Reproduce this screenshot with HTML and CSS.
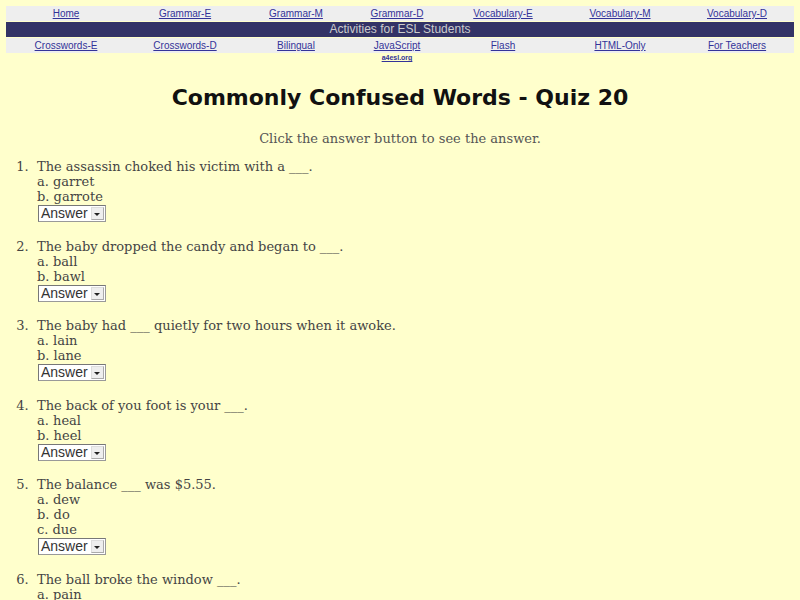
FILE: index.html
```html
<!DOCTYPE html>
<html>
<head>
<meta charset="utf-8">
<title>Commonly Confused Words - Quiz 20</title>
<link rel="stylesheet" href="styles.css">
</head>
<body>
<div class="nav">
  <div class="row links">
    <a href="#">Home</a><a href="#">Grammar-E</a><a href="#">Grammar-M</a><a href="#">Grammar-D</a><a href="#">Vocabulary-E</a><a href="#">Vocabulary-M</a><a href="#">Vocabulary-D</a>
  </div>
  <div class="row bar">Activities for ESL Students</div>
  <div class="row links">
    <a href="#">Crosswords-E</a><a href="#">Crosswords-D</a><a href="#">Bilingual</a><a href="#">JavaScript</a><a href="#">Flash</a><a href="#">HTML-Only</a><a href="#">For Teachers</a>
  </div>
  <div class="row sub">
    <span></span><span></span><span></span><a href="#" class="tiny">a4esl.org</a><span></span><span></span><span></span>
  </div>
</div>

<h1 class="title">Commonly Confused Words - Quiz 20</h1>
<p class="intro">Click the answer button to see the answer.</p>

<ol class="quiz">
  <li>
    <div>The assassin choked his victim with a ___.</div>
    <div>a. garret</div>
    <div>b. garrote</div>
    <div class="ans"><span class="ans-text">Answer</span><span class="ans-btn"></span></div>
  </li>
  <li>
    <div>The baby dropped the candy and began to ___.</div>
    <div>a. ball</div>
    <div>b. bawl</div>
    <div class="ans"><span class="ans-text">Answer</span><span class="ans-btn"></span></div>
  </li>
  <li>
    <div>The baby had ___ quietly for two hours when it awoke.</div>
    <div>a. lain</div>
    <div>b. lane</div>
    <div class="ans"><span class="ans-text">Answer</span><span class="ans-btn"></span></div>
  </li>
  <li>
    <div>The back of you foot is your ___.</div>
    <div>a. heal</div>
    <div>b. heel</div>
    <div class="ans"><span class="ans-text">Answer</span><span class="ans-btn"></span></div>
  </li>
  <li>
    <div>The balance ___ was $5.55.</div>
    <div>a. dew</div>
    <div>b. do</div>
    <div>c. due</div>
    <div class="ans"><span class="ans-text">Answer</span><span class="ans-btn"></span></div>
  </li>
  <li>
    <div>The ball broke the window ___.</div>
    <div>a. pain</div>
    <div>b. pane</div>
    <div class="ans"><span class="ans-text">Answer</span><span class="ans-btn"></span></div>
  </li>
</ol>
</body>
</html>
```

FILE: styles.css
```css
html, body {
  margin: 0;
  padding: 0;
  background: #ffffcc;
}
body {
  padding: 6px 6px 0 6px;
  font-family: "DejaVu Serif", serif;
  color: #444444;
}
.nav {
  display: flex;
  flex-direction: column;
  gap: 1px;
  font-family: "Liberation Sans", Arial, sans-serif;
}
.row {
  display: grid;
  grid-template-columns: 120px 118px 104px 98px 114px 120px 1fr;
  text-align: center;
}
.links {
  background: #eeeeee;
  height: 15px;
  line-height: 15px;
  font-size: 10px;
}
.links a {
  color: #333399;
  text-decoration: underline;
}
.bar {
  display: block;
  background: #333366;
  color: #cccccc;
  height: 15px;
  line-height: 15px;
  font-size: 12px;
}
.sub {
  height: 8px;
  line-height: 8px;
}
.tiny {
  font-size: 7px;
  color: #333399;
  font-weight: bold;
}
.title {
  margin: 21px 0 0 0;
  text-align: center;
  font-family: "DejaVu Sans", sans-serif;
  font-weight: bold;
  font-size: 22px;
  line-height: 30px;
  color: #111111;
}
.intro {
  margin: 18px 0 0 0;
  text-align: center;
  font-size: 13px;
  line-height: 15px;
  color: #555555;
}
.quiz {
  margin: 13px 0 0 0;
  padding-left: 31px;
  font-size: 13px;
  line-height: 15px;
}
.quiz li {
  margin-bottom: 16.5px;
}
.quiz li::marker {
  content: counter(list-item) ".\00a0\00a0";
}
.ans {
  display: inline-flex;
  align-items: stretch;
  margin-top: 1px;
  margin-left: 1px;
  height: 17px;
  width: 68px;
  box-sizing: border-box;
  border: 1px solid #999999;
  border-top-color: #777777;
  border-left-color: #777777;
  background: #ffffff;
  font-family: "Liberation Sans", Arial, sans-serif;
  font-size: 14px;
  color: #333333;
}
.ans-text {
  flex: 1;
  line-height: 15px;
  padding-left: 2px;
}
.ans-btn {
  width: 11px;
  margin: 1px;
  background: #eeeeee;
  border: 1px solid #aaaaaa;
  border-top-color: #dddddd;
  border-left-color: #dddddd;
  position: relative;
}
.ans-btn::after {
  content: "";
  position: absolute;
  left: 2px;
  top: 5px;
  border-left: 3px solid transparent;
  border-right: 3px solid transparent;
  border-top: 3px solid #222222;
}
```
